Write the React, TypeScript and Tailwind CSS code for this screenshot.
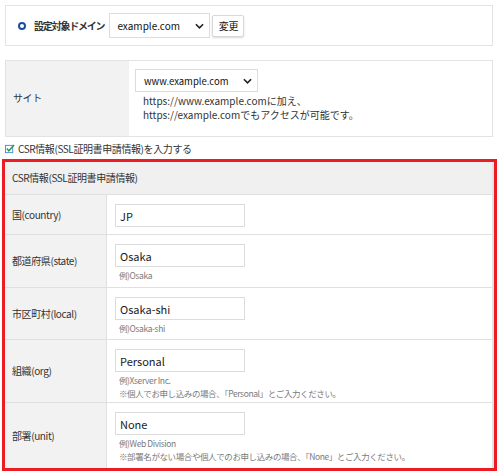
const font = { fontFamily: '"Noto Sans CJK JP", "Noto Sans", sans-serif' };

function Chevron() {
  return (
    <svg viewBox="0 0 10 6" className="h-[6px] w-[9px]" fill="none" stroke="#222" strokeWidth="1.8">
      <path d="M1 1l4 4 4-4" />
    </svg>
  );
}

function Field({ value, hints }: { value: string; hints?: string[] }) {
  return (
    <div className="flex flex-col">
      <div className="flex h-[23px] w-[130px] items-center border border-[#dcdcdc] bg-white px-[4px] text-[11px] tracking-normal text-[#1a1a1a]">
        {value}
      </div>
      {hints && (
        <div className="mt-[2px] pl-[4px] text-[8.5px] leading-[13px] text-[#7a7a7a]">
          {hints.map((h) => (
            <div key={h}>{h}</div>
          ))}
        </div>
      )}
    </div>
  );
}

export default function App() {
  const rows = [
    { label: "国(country)", value: "JP", h: "h-[40px]" },
    { label: "都道府県(state)", value: "Osaka", hints: ["例)Osaka"], h: "h-[53px]" },
    { label: "市区町村(local)", value: "Osaka-shi", hints: ["例)Osaka-shi"], h: "h-[52px]" },
    { label: "組織(org)", value: "Personal", hints: ["例)Xserver Inc.", "※個人でお申し込みの場合、「Personal」とご入力ください。"], h: "h-[63px]" },
    { label: "部署(unit)", value: "None", hints: ["例)Web Division", "※部署名がない場合や個人でのお申し込みの場合、「None」とご入力ください。"], h: "h-[65px]" },
  ];

  return (
    <div className="h-[475px] w-[500px] overflow-hidden bg-white pl-[5px] pr-[7px] pt-[5px] text-[10px] leading-[14px] tracking-[-0.4px] text-[#333]" style={font}>
      {/* Domain selector */}
      <div className="flex h-[41px] items-center border border-[#e3e3e3] pl-[12px]">
        <span className="h-[8px] w-[8px] rounded-full border-[2px] border-[#1a4f9c]" />
        <span className="ml-[8px] font-bold tracking-[-1.2px] text-[#333]">設定対象ドメイン</span>
        <div className="ml-[5px] flex h-[25px] w-[101px] items-center justify-between border border-[#dcdcdc] pl-[7px] pr-[5px] text-[10px] tracking-normal text-[#111]">
          <span>example.com</span>
          <Chevron />
        </div>
        <button className="ml-[2px] h-[22px] w-[32px] rounded-[2px] border border-[#d8d8d8] bg-white text-[10px] text-[#222] shadow-[0_1px_2px_rgba(0,0,0,0.15)]">
          変更
        </button>
      </div>

      {/* Site */}
      <div className="mt-[14px] flex h-[77px] border border-[#e3e3e3]">
        <div className="flex w-[123px] items-center bg-[#f2f2f2] pb-[2px] pl-[7px]">サイト</div>
        <div className="flex flex-col pl-[6px] pt-[8px]">
          <div className="flex h-[23px] w-[123px] items-center justify-between border border-[#dcdcdc] pl-[8px] pr-[5px] text-[9.5px] tracking-normal text-[#111]">
            <span>www.example.com</span>
            <Chevron />
          </div>
          <div className="mt-[2px] pl-[8px] text-[10px] leading-[14px] tracking-normal text-[#333]">
            <div>https://www.example.comに加え、</div>
            <div>https://example.comでもアクセスが可能です。</div>
          </div>
        </div>
      </div>

      {/* Checkbox */}
      <div className="mt-[3px] flex h-[17px] items-center">
        <svg viewBox="0 0 11 11" className="h-[10px] w-[10px]">
          <rect x="0.5" y="1.5" width="8" height="8" fill="white" stroke="#3a8fd8" strokeWidth="1" />
          <path d="M2 5l2.2 2.5L10 1" fill="none" stroke="#2a9b5c" strokeWidth="1.6" />
        </svg>
        <span className="ml-[3px] text-[10px]">CSR情報(SSL証明書申請情報)を入力する</span>
      </div>

      {/* CSR table */}
      <div className="-ml-[3px] -mr-[4px] mt-[2px] border-[3px] border-[#ec1c24]">
        <div className="border-r-[2px] border-[#e3e3e3]">
          <div className="flex h-[33px] items-center border-b border-[#e0e0e0] bg-[#f0f0f0] pl-[7px]">
            CSR情報(SSL証明書申請情報)
          </div>
          {rows.map((r, i) => (
            <div key={r.label} className={`flex ${r.h} ${i < rows.length - 1 ? "border-b border-[#e0e0e0]" : ""}`}>
              <div className="flex w-[102px] shrink-0 items-center border-r border-[#e0e0e0] bg-[#f2f2f2] pl-[7px]">
                {r.label}
              </div>
              <div className="pl-[8px] pt-[9px]">
                <Field value={r.value} hints={r.hints} />
              </div>
            </div>
          ))}
        </div>
      </div>
    </div>
  );
}
